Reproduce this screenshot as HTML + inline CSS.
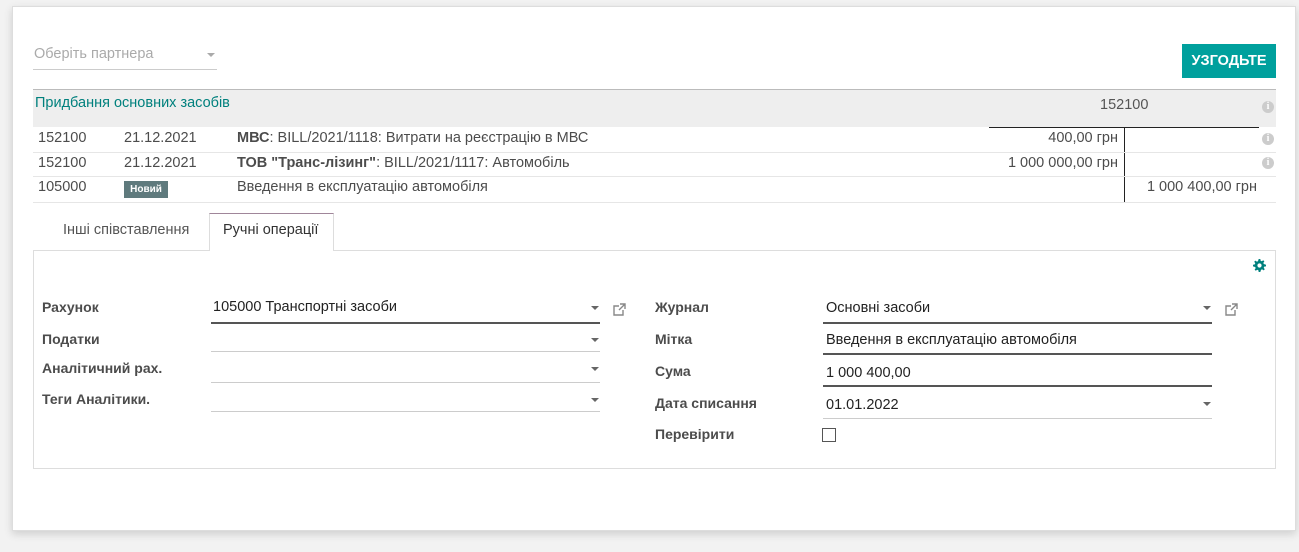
<!DOCTYPE html>
<html><head><meta charset="utf-8"><style>
*{box-sizing:border-box;margin:0;padding:0}
body{width:1299px;height:552px;background:#f2f2f2;font-family:"Liberation Sans",sans-serif;font-size:14.5px;color:#4c4c4c;position:relative;overflow:hidden}
.card{position:absolute;left:12px;top:6px;width:1284px;height:525px;background:#fff;border:1px solid #ddd;box-shadow:0 3px 8px rgba(0,0,0,.15)}
.a{position:absolute;white-space:nowrap}
.hl{position:absolute;height:1px;background:#ddd}
.caret{position:absolute;width:0;height:0;border-left:4px solid transparent;border-right:4px solid transparent;border-top:4px solid #666}
.lbl{position:absolute;font-weight:bold;font-size:14px;color:#4c4c4c}
.fld{position:absolute;height:1px;background:#ccc}
.fld.dark{height:2px;background:#555}
.v{position:absolute;color:#222;font-size:14.5px}
.info{position:absolute;width:12px;height:12px;border-radius:50%;background:#ccc;color:#fff;font-size:10px;font-weight:bold;text-align:center;line-height:12px;font-family:"Liberation Serif",serif}
</style></head><body>
<div class="card"></div>
<div class="a" style="left:34px;top:46px;color:#aaa">Оберіть партнера</div>
<div class="caret" style="left:207px;top:53px;border-top-color:#aaa"></div>
<div class="hl" style="left:33px;top:69px;width:184px;background:#ccc"></div>
<div class="a" style="left:1182px;top:44px;width:94px;height:34px;background:#00a09d;color:#fff;font-weight:bold;font-size:14.5px;text-align:center;line-height:34px">УЗГОДЬТЕ</div>

<div class="a" style="left:33px;top:89px;width:1243px;height:38px;background:#eee;border-top:1px solid #bbb"></div>
<div class="a" style="left:35px;top:95px;color:#00807d">Придбання основних засобів</div>
<div class="a" style="left:1100px;top:97px;color:#555">152100</div>
<div class="info" style="left:1262px;top:101px">i</div>
<div class="a" style="left:989px;top:127px;width:270px;height:1px;background:#222"></div>
<div class="a" style="left:1124px;top:127px;width:1px;height:75px;background:#222"></div>

<div class="a" style="left:38px;top:130px">152100</div>
<div class="a" style="left:124px;top:130px">21.12.2021</div>
<div class="a" style="left:237px;top:130px"><b>МВС</b>: BILL/2021/1118: Витрати на реєстрацію в МВС</div>
<div class="a" style="left:900px;top:130px;width:218px;text-align:right">400,00 грн</div>
<div class="info" style="left:1262px;top:133px">i</div>
<div class="hl" style="left:33px;top:152px;width:1243px;background:#e6e6e6"></div>
<div class="a" style="left:38px;top:155px">152100</div>
<div class="a" style="left:124px;top:155px">21.12.2021</div>
<div class="a" style="left:237px;top:155px"><b>ТОВ "Транс-лізинг"</b>: BILL/2021/1117: Автомобіль</div>
<div class="a" style="left:900px;top:155px;width:218px;text-align:right">1 000 000,00 грн</div>
<div class="info" style="left:1262px;top:157px">i</div>
<div class="hl" style="left:33px;top:176px;width:1243px;background:#e6e6e6"></div>
<div class="a" style="left:38px;top:179px">105000</div>
<div class="a" style="left:124px;top:181px;width:44px;height:17px;background:#5f7a7d;color:#fff;font-size:10px;font-weight:bold;text-align:center;line-height:17px">Новий</div>
<div class="a" style="left:237px;top:179px">Введення в експлуатацію автомобіля</div>
<div class="a" style="left:1130px;top:179px;width:127px;text-align:right">1 000 400,00 грн</div>
<div class="hl" style="left:33px;top:202px;width:1243px;background:#e6e6e6"></div>

<div class="a" style="left:63px;top:222px;color:#555">Інші співставлення</div>
<div class="a" style="left:209px;top:213px;width:125px;height:38px;border:1px solid #ddd;border-bottom:none;border-top:1px solid #a0869a;background:#fff;z-index:2"></div>
<div class="a" style="left:223px;top:222px;color:#333;z-index:3">Ручні операції</div>
<div class="a" style="left:33px;top:250px;width:1243px;height:219px;border:1px solid #ddd"></div>
<svg class="a" style="left:1253px;top:259px" width="13" height="13" viewBox="0 0 16 16"><path fill="#00807d" d="M7 0h2l.4 2.2 1.4.6 1.8-1.3 1.4 1.4-1.3 1.8.6 1.4L16 7v2l-2.2.4-.6 1.4 1.3 1.8-1.4 1.4-1.8-1.3-1.4.6L9 16H7l-.4-2.2-1.4-.6-1.8 1.3-1.4-1.4 1.3-1.8-.6-1.4L0 9V7l2.2-.4.6-1.4-1.3-1.8 1.4-1.4 1.8 1.3 1.4-.6z"/><circle cx="8" cy="8" r="2.6" fill="#fff"/></svg>

<div class="lbl" style="left:42px;top:299px">Рахунок</div>
<div class="v" style="left:213px;top:299px">105000 Транспортні засоби</div>
<div class="caret" style="left:591px;top:306px"></div>
<div class="fld dark" style="left:211px;top:322px;width:389px"></div>
<svg class="a" style="left:612px;top:302px" width="15" height="15" viewBox="0 0 15 15"><path d="M11 8v5H2V4h5" fill="none" stroke="#888" stroke-width="1.4"/><path d="M8 2h5v5M13 2 7 8" fill="none" stroke="#888" stroke-width="1.4"/></svg>
<div class="lbl" style="left:42px;top:331px">Податки</div>
<div class="caret" style="left:591px;top:338px"></div>
<div class="fld" style="left:211px;top:351px;width:389px"></div>
<div class="lbl" style="left:42px;top:360px">Аналітичний рах.</div>
<div class="caret" style="left:591px;top:367px"></div>
<div class="fld" style="left:211px;top:382px;width:389px"></div>
<div class="lbl" style="left:42px;top:391px">Теги Аналітики.</div>
<div class="caret" style="left:591px;top:398px"></div>
<div class="fld" style="left:211px;top:411px;width:389px"></div>

<div class="lbl" style="left:655px;top:299px">Журнал</div>
<div class="v" style="left:826px;top:300px">Основні засоби</div>
<div class="caret" style="left:1203px;top:306px"></div>
<div class="fld dark" style="left:823px;top:322px;width:389px"></div>
<svg class="a" style="left:1224px;top:302px" width="15" height="15" viewBox="0 0 15 15"><path d="M11 8v5H2V4h5" fill="none" stroke="#888" stroke-width="1.4"/><path d="M8 2h5v5M13 2 7 8" fill="none" stroke="#888" stroke-width="1.4"/></svg>
<div class="lbl" style="left:655px;top:331px">Мітка</div>
<div class="v" style="left:826px;top:332px">Введення в експлуатацію автомобіля</div>
<div class="fld dark" style="left:823px;top:353px;width:389px"></div>
<div class="lbl" style="left:655px;top:363px">Сума</div>
<div class="v" style="left:826px;top:365px">1 000 400,00</div>
<div class="fld dark" style="left:823px;top:385px;width:389px"></div>
<div class="lbl" style="left:655px;top:395px">Дата списання</div>
<div class="v" style="left:826px;top:397px">01.01.2022</div>
<div class="caret" style="left:1203px;top:402px"></div>
<div class="fld" style="left:823px;top:418px;width:389px"></div>
<div class="lbl" style="left:655px;top:426px">Перевірити</div>
<div class="a" style="left:822px;top:428px;width:14px;height:14px;border:1px solid #555"></div>
</body></html>
